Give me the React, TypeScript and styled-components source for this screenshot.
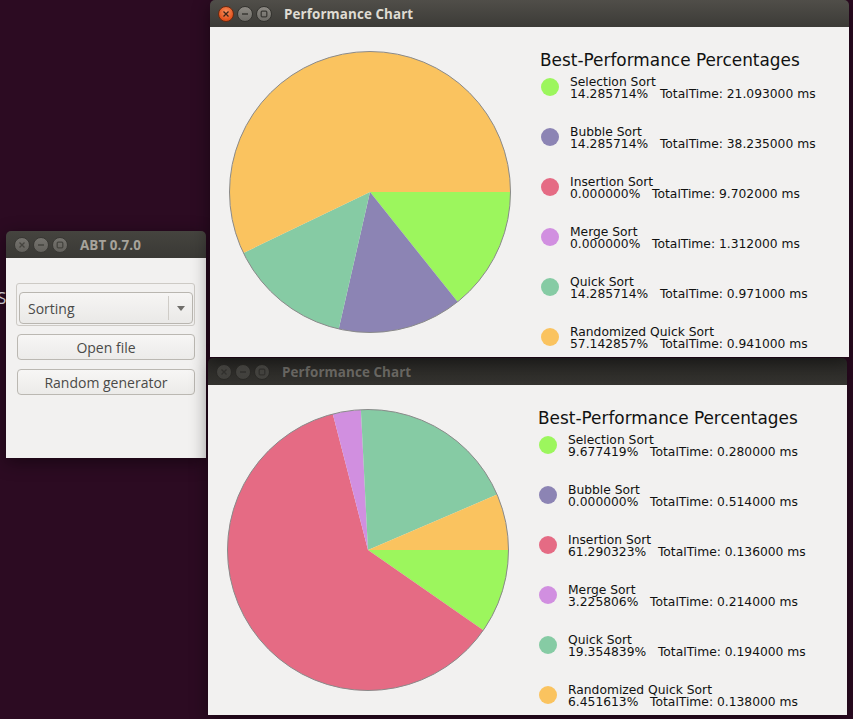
import React from 'react';
import styled, { createGlobalStyle, css } from 'styled-components';

type Tone = 'active' | 'inactive' | 'dim';

type Entry = { name: string; pct: string; time: string; color: string };

const COLORS = ['#9cf65d', '#8c84b4', '#e56b84', '#d18fe0', '#86cba4', '#fac35f'];
const NAMES = [
  'Selection Sort',
  'Bubble Sort',
  'Insertion Sort',
  'Merge Sort',
  'Quick Sort',
  'Randomized Quick Sort',
];

const makeEntries = (rows: [string, string][]): Entry[] =>
  rows.map(([pct, time], i) => ({ name: NAMES[i], pct, time, color: COLORS[i] }));

const firstRun = makeEntries([
  ['14.285714', '21.093000'],
  ['14.285714', '38.235000'],
  ['0.000000', '9.702000'],
  ['0.000000', '1.312000'],
  ['14.285714', '0.971000'],
  ['57.142857', '0.941000'],
]);

const secondRun = makeEntries([
  ['9.677419', '0.280000'],
  ['0.000000', '0.514000'],
  ['61.290323', '0.136000'],
  ['3.225806', '0.214000'],
  ['19.354839', '0.194000'],
  ['6.451613', '0.138000'],
]);

const GlobalStyle = createGlobalStyle`
  html, body {
    margin: 0;
    padding: 0;
    background: #2c0b22;
    overflow: hidden;
  }
`;

const Desktop = styled.div`
  position: relative;
  width: 853px;
  height: 719px;
  overflow: hidden;
  background: #2c0b22;
  font-family: 'DejaVu Sans', sans-serif;
`;

const DesktopLabel = styled.span`
  position: absolute;
  left: -3px;
  top: 286px;
  font-family: 'Open Sans', sans-serif;
  font-size: 17px;
  color: #e8e4ea;
`;

const Window = styled.div<{ $x: number; $y: number; $w: number; $z: number }>`
  position: absolute;
  left: ${(p) => p.$x}px;
  top: ${(p) => p.$y}px;
  width: ${(p) => p.$w}px;
  z-index: ${(p) => p.$z};
  border-radius: 5px 5px 0 0;
  overflow: hidden;
  box-shadow: 0 4px 18px rgba(0, 0, 0, 0.45);
`;

const barTones = {
  active: css`
    background: linear-gradient(#504e49, #3c3b37);
    color: #dfdbd2;
  `,
  inactive: css`
    background: linear-gradient(#45443f, #3a3935);
    color: #a7a39b;
  `,
  dim: css`
    background: linear-gradient(#272624, #34332f);
    color: #6c6a65;
  `,
};

const TitleBar = styled.div<{ $tone: Tone }>`
  height: 27px;
  display: flex;
  align-items: center;
  padding-left: 8px;
  gap: 3px;
  ${(p) => barTones[p.$tone]}
`;

const TitleText = styled.span`
  margin-left: 9px;
  font-family: 'Open Sans', sans-serif;
  font-weight: 700;
  font-size: 13.4px;
  letter-spacing: 0.1px;
`;

const buttonTones = {
  active: css`
    background: linear-gradient(#8d8a84, #6d6b66);
    border-color: #34332f;
    color: #3a3935;
  `,
  inactive: css`
    background: linear-gradient(#75736e, #63615c);
    border-color: #3a3935;
    color: #45443f;
  `,
  dim: css`
    background: linear-gradient(#4a4945, #42413d);
    border-color: #2c2b28;
    color: #33322f;
  `,
};

const WinButton = styled.div<{ $tone: Tone; $close?: boolean }>`
  width: 16px;
  height: 16px;
  box-sizing: border-box;
  border: 1px solid;
  border-radius: 50%;
  display: flex;
  align-items: center;
  justify-content: center;
  ${(p) => buttonTones[p.$tone]}
  ${(p) =>
    p.$close &&
    p.$tone === 'active' &&
    css`
      background: radial-gradient(circle at 50% 35%, #f7915f, #e2511c 70%);
      border-color: #6b2a10;
      color: #3c2418;
    `}
`;

const Glyph = ({ kind }: { kind: 'close' | 'min' | 'max' }) => (
  <svg width="8" height="8" viewBox="0 0 8 8" fill="none" stroke="currentColor" strokeWidth="1.3">
    {kind === 'close' && <path d="M1.5 1.5 L6.5 6.5 M6.5 1.5 L1.5 6.5" />}
    {kind === 'min' && <path d="M1 4 H7" />}
    {kind === 'max' && <rect x="1.2" y="1.2" width="5.6" height="5.6" rx="1" />}
  </svg>
);

const WindowFrame = ({
  title,
  tone,
  children,
}: {
  title: string;
  tone: Tone;
  children: React.ReactNode;
}) => (
  <>
    <TitleBar $tone={tone}>
      <WinButton $tone={tone} $close>
        <Glyph kind="close" />
      </WinButton>
      <WinButton $tone={tone}>
        <Glyph kind="min" />
      </WinButton>
      <WinButton $tone={tone}>
        <Glyph kind="max" />
      </WinButton>
      <TitleText>{title}</TitleText>
    </TitleBar>
    {children}
  </>
);

/* ---------- chart window ---------- */

const ChartBody = styled.div`
  height: 330px;
  background: #f2f1f0;
  display: flex;
  overflow: hidden;
`;

const PieBox = styled.div`
  width: 320px;
  flex: none;
`;

const Legend = styled.div`
  padding: 24px 0 0 11px;
  display: flex;
  flex-direction: column;
  color: #111;
`;

const LegendHeading = styled.div`
  flex: none;
  font-size: 16.9px;
  line-height: 19px;
  margin: 0 0 8px -1px;
  white-space: nowrap;
`;

const LegendItem = styled.div`
  flex: none;
  height: 50px;
  display: flex;
  align-items: flex-start;
  gap: 11px;
`;

const Dot = styled.div<{ $color: string }>`
  width: 18px;
  height: 18px;
  border-radius: 50%;
  background: ${(p) => p.$color};
  flex: none;
`;

const ItemText = styled.div`
  margin-top: -1px;
  font-size: 12.3px;
  line-height: 11.8px;
  white-space: pre;
`;

const CX = 160;
const CY = 165;
const R = 140.5;

const Pie = ({ entries }: { entries: Entry[] }) => {
  let angle = 0;
  const slices = entries.map((e) => {
    const sweep = (parseFloat(e.pct) / 100) * Math.PI * 2;
    const a0 = angle;
    const a1 = angle + sweep;
    angle = a1;
    if (sweep <= 0) return null;
    const x0 = CX + R * Math.cos(a0);
    const y0 = CY + R * Math.sin(a0);
    const x1 = CX + R * Math.cos(a1);
    const y1 = CY + R * Math.sin(a1);
    const large = sweep > Math.PI ? 1 : 0;
    return (
      <path
        key={e.name}
        d={`M${CX} ${CY} L${x0} ${y0} A${R} ${R} 0 ${large} 1 ${x1} ${y1} Z`}
        fill={e.color}
      />
    );
  });
  return (
    <svg width="320" height="330" viewBox="0 0 320 330">
      {slices}
      <circle cx={CX} cy={CY} r={R} fill="none" stroke="#8a8a8a" strokeWidth="1" />
    </svg>
  );
};

const ChartWindow = ({ entries }: { entries: Entry[] }) => (
  <ChartBody>
    <PieBox>
      <Pie entries={entries} />
    </PieBox>
    <Legend>
      <LegendHeading>Best-Performance Percentages</LegendHeading>
      {entries.map((e) => (
        <LegendItem key={e.name}>
          <Dot $color={e.color} />
          <ItemText>
            {e.name}
            {'\n'}
            {`${e.pct}%   TotalTime: ${e.time} ms`}
          </ItemText>
        </LegendItem>
      ))}
    </Legend>
  </ChartBody>
);

/* ---------- ABT launcher ---------- */

const LauncherBody = styled.div`
  height: 200px;
  box-sizing: border-box;
  background: #f2f1f0;
  padding: 25px 11px 0 10px;
  display: flex;
  flex-direction: column;
  font-family: 'Open Sans', sans-serif;
  font-size: 14px;
  color: #4a4a48;
`;

const GroupFrame = styled.div`
  border: 1px solid #cdcac5;
  border-radius: 3px;
  padding: 8px 1px 1px 2px;
  margin-bottom: 8px;
`;

const Combo = styled.div`
  height: 32px;
  box-sizing: border-box;
  border: 1px solid #b9b6b0;
  border-radius: 4px;
  background: linear-gradient(#f6f5f4, #eae9e7);
  display: flex;
  align-items: center;
  padding-left: 8px;
`;

const ComboLabel = styled.span`
  flex: 1;
`;

const ComboDivider = styled.div`
  width: 1px;
  align-self: stretch;
  margin: 3px 0;
  background: #cfccc7;
`;

const ComboArrow = styled.div`
  width: 23px;
  display: flex;
  justify-content: center;
`;

const PushButton = styled.div`
  height: 26px;
  box-sizing: border-box;
  margin: 0 0 9px 1px;
  border: 1px solid #bbb8b2;
  border-radius: 4px;
  background: linear-gradient(#f7f6f5, #ecebe9);
  display: flex;
  align-items: center;
  justify-content: center;
`;

export default function App() {
  return (
    <>
      <GlobalStyle />
      <Desktop>
        <DesktopLabel>S</DesktopLabel>

        <Window $x={6} $y={231} $w={200} $z={1}>
          <WindowFrame title="ABT 0.7.0" tone="inactive">
            <LauncherBody>
              <GroupFrame>
                <Combo>
                  <ComboLabel>Sorting</ComboLabel>
                  <ComboDivider />
                  <ComboArrow>
                    <svg width="8" height="5" viewBox="0 0 8 5">
                      <path d="M0 0 H8 L4 5 Z" fill="#6f6e6a" />
                    </svg>
                  </ComboArrow>
                </Combo>
              </GroupFrame>
              <PushButton>Open file</PushButton>
              <PushButton>Random generator</PushButton>
            </LauncherBody>
          </WindowFrame>
        </Window>

        <Window $x={208} $y={358} $w={639} $z={2}>
          <WindowFrame title="Performance Chart" tone="dim">
            <ChartWindow entries={secondRun} />
          </WindowFrame>
        </Window>

        <Window $x={210} $y={0} $w={639} $z={3}>
          <WindowFrame title="Performance Chart" tone="active">
            <ChartWindow entries={firstRun} />
          </WindowFrame>
        </Window>
      </Desktop>
    </>
  );
}
